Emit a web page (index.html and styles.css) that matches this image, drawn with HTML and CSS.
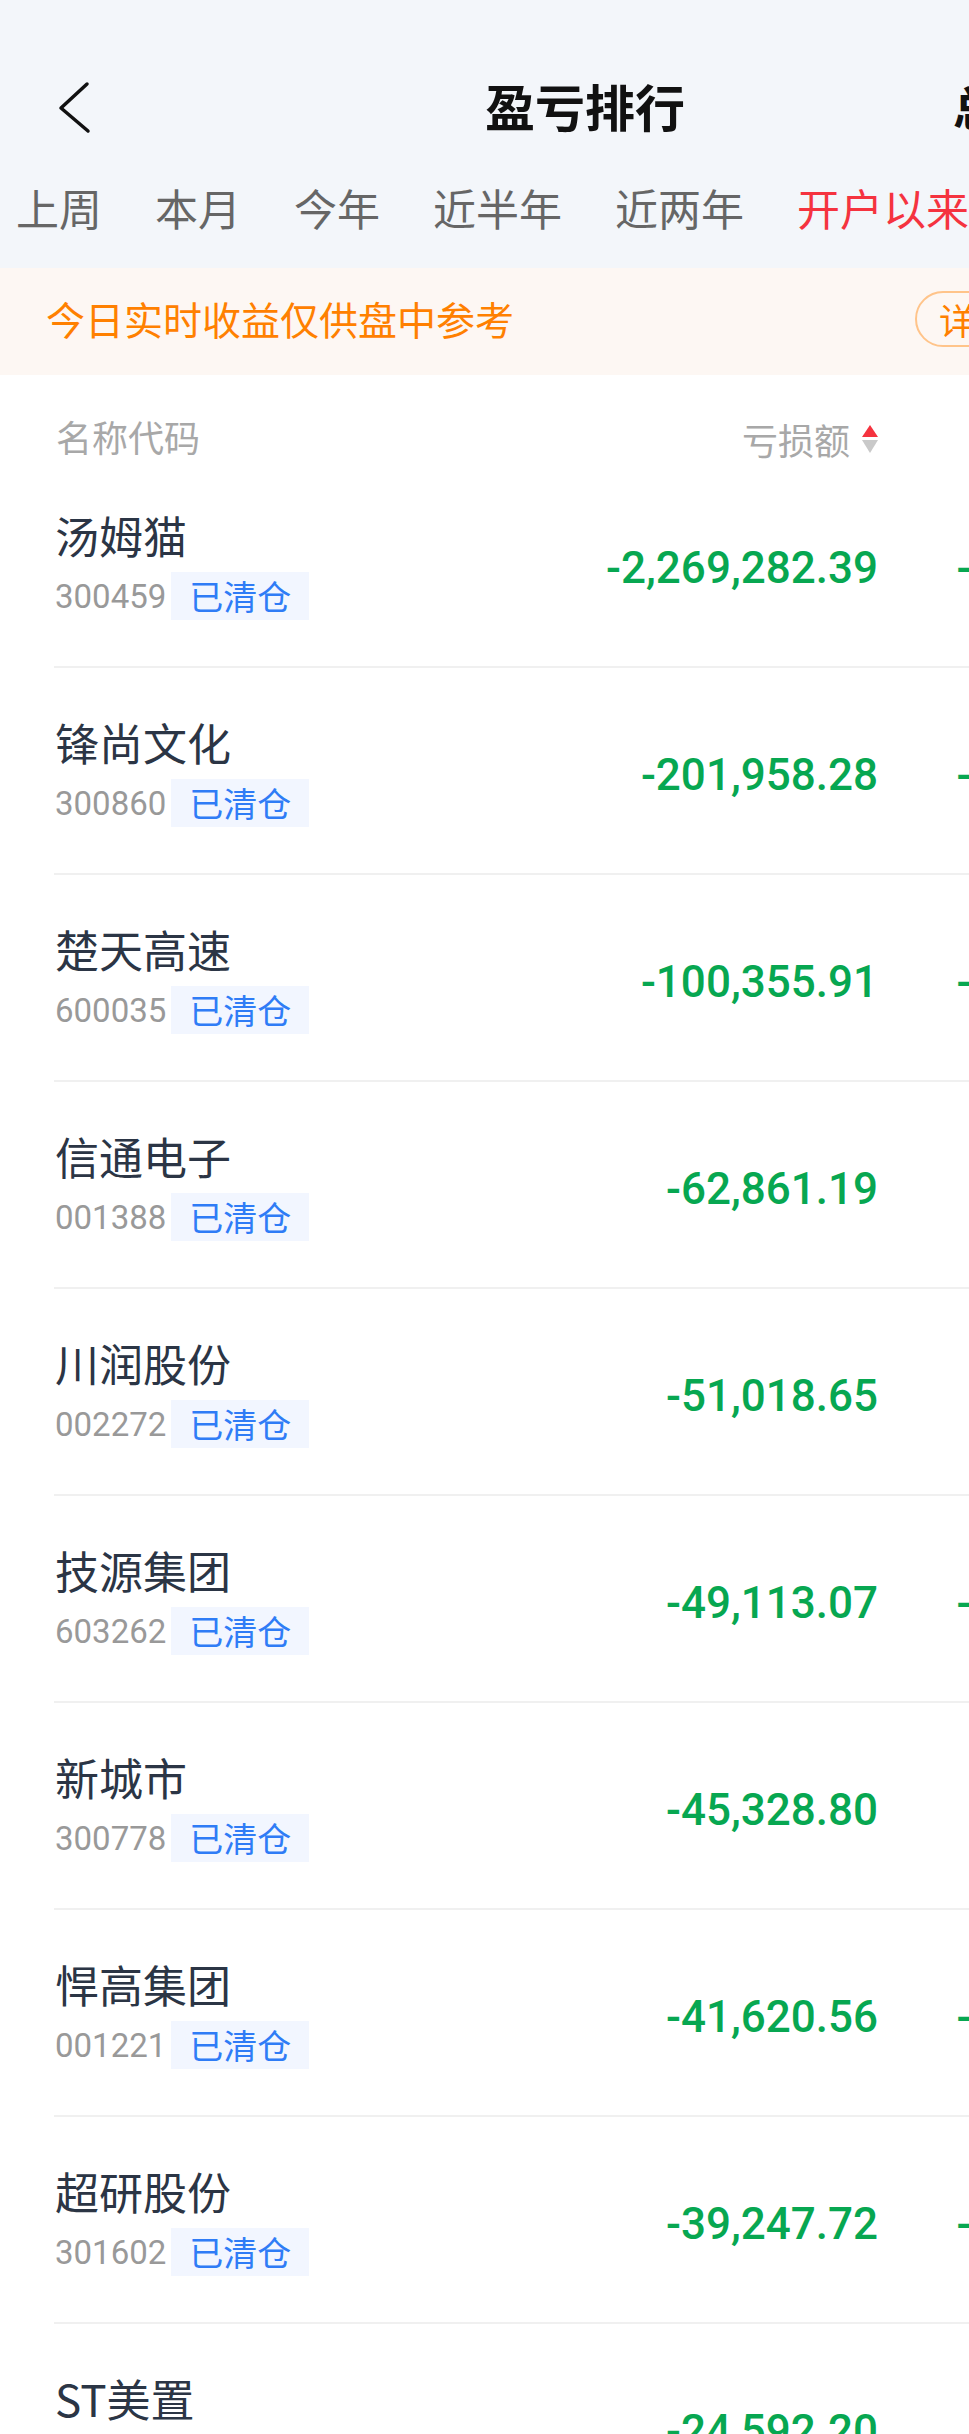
FILE: index.html
```html
<!DOCTYPE html>
<html>
<head>
  <meta charset="utf-8">
  <title>盈亏排行</title>
  <link rel="stylesheet" href="styles.css">
</head>
<body>
  <div class="viewport">
    <div class="page">
      <div class="top">
        <header class="nav">
          <a class="back" href="#">
            <svg width="34" height="54" viewBox="0 0 34 54"><path d="M29 3 L3 27 L30 50" fill="none" stroke="#111" stroke-width="3.5" stroke-linecap="round" stroke-linejoin="round"/></svg>
          </a>
          <h1 class="title">盈亏排行</h1>
          <span class="nav-right">总览</span>
        </header>
        <nav class="tabs">
          <span class="tab">上周</span>
          <span class="tab">本月</span>
          <span class="tab">今年</span>
          <span class="tab">近半年</span>
          <span class="tab">近两年</span>
          <span class="tab active">开户以来</span>
        </nav>
      </div>

      <div class="notice">
        <span class="notice-text">今日实时收益仅供盘中参考</span>
        <span class="detail-btn">详情</span>
      </div>

      <div class="list">
        <div class="list-head">
          <span class="col-name">名称代码</span>
          <span class="col-val">亏损额
            <svg class="sort" width="16" height="28" viewBox="0 0 16 28"><path d="M8 0 L16 12 L0 12 Z" fill="#f5333f"/><path d="M0 15 L16 15 L8 28 Z" fill="#c9c9c9"/></svg>
          </span>
          <span class="col-val2">收益率</span>
        </div>

        <div class="row">
          <div class="col-name"><div class="name">汤姆猫</div><div class="meta"><span class="code">300459</span><span class="tag">已清仓</span></div></div>
          <div class="col-val num">-2,269,282.39</div>
          <div class="col-val2 num">-38.72%</div>
        </div>
        <div class="row">
          <div class="col-name"><div class="name">锋尚文化</div><div class="meta"><span class="code">300860</span><span class="tag">已清仓</span></div></div>
          <div class="col-val num">-201,958.28</div>
          <div class="col-val2 num">-21.56%</div>
        </div>
        <div class="row">
          <div class="col-name"><div class="name">楚天高速</div><div class="meta"><span class="code">600035</span><span class="tag">已清仓</span></div></div>
          <div class="col-val num">-100,355.91</div>
          <div class="col-val2 num">-14.03%</div>
        </div>
        <div class="row">
          <div class="col-name"><div class="name">信通电子</div><div class="meta"><span class="code">001388</span><span class="tag">已清仓</span></div></div>
          <div class="col-val num">-62,861.19</div>
          <div class="col-val2 num">-8.47%</div>
        </div>
        <div class="row">
          <div class="col-name"><div class="name">川润股份</div><div class="meta"><span class="code">002272</span><span class="tag">已清仓</span></div></div>
          <div class="col-val num">-51,018.65</div>
          <div class="col-val2 num">-6.92%</div>
        </div>
        <div class="row">
          <div class="col-name"><div class="name">技源集团</div><div class="meta"><span class="code">603262</span><span class="tag">已清仓</span></div></div>
          <div class="col-val num">-49,113.07</div>
          <div class="col-val2 num">-12.38%</div>
        </div>
        <div class="row">
          <div class="col-name"><div class="name">新城市</div><div class="meta"><span class="code">300778</span><span class="tag">已清仓</span></div></div>
          <div class="col-val num">-45,328.80</div>
          <div class="col-val2 num">-5.14%</div>
        </div>
        <div class="row">
          <div class="col-name"><div class="name">悍高集团</div><div class="meta"><span class="code">001221</span><span class="tag">已清仓</span></div></div>
          <div class="col-val num">-41,620.56</div>
          <div class="col-val2 num">-17.65%</div>
        </div>
        <div class="row">
          <div class="col-name"><div class="name">超研股份</div><div class="meta"><span class="code">301602</span><span class="tag">已清仓</span></div></div>
          <div class="col-val num">-39,247.72</div>
          <div class="col-val2 num">-10.29%</div>
        </div>
        <div class="row">
          <div class="col-name"><div class="name">ST美置</div><div class="meta"><span class="code">000667</span><span class="tag">已清仓</span></div></div>
          <div class="col-val num">-24,592.20</div>
          <div class="col-val2 num">-3.81%</div>
        </div>
      </div>
    </div>
  </div>
</body>
</html>
```

FILE: styles.css
```css
html, body { margin: 0; padding: 0; background: #fff; }
body { font-family: "Noto Sans CJK SC", "Noto Sans", sans-serif; }

.viewport { width: 969px; overflow: hidden; }
.page { width: 1170px; }

/* top bar + period tabs */
.top { background: #f3f6fa; padding-top: 47px; padding-bottom: 17px; }
.nav { height: 116px; display: grid; grid-template-columns: 1fr auto 1fr; align-items: center; }
.back { display: flex; padding-left: 58px; margin-top: 6px; }
.title { margin: 0; font-size: 50px; font-weight: 700; color: #111; line-height: 60px; }
.nav-right { justify-self: end; padding-right: 125px; font-size: 46px; font-weight: 700; color: #111; line-height: 60px; }

.tabs { height: 88px; display: flex; align-items: center; gap: 53px; padding-left: 16px; white-space: nowrap; }
.tab { font-size: 43px; line-height: 1; color: #666; }
.tab.active { color: #f5333f; }

/* notice banner */
.notice { height: 107px; box-sizing: border-box; background: #fdf7f3; display: flex; align-items: center; justify-content: space-between; padding: 0 135px 6px 46px; }
.notice-text { font-size: 39px; color: #ff8000; line-height: 1; }
.detail-btn { height: 56px; box-sizing: border-box; border: 2px solid #ffc48a; border-radius: 28px; padding: 0 22px; font-size: 36px; line-height: 52px; color: #ff8000; }

/* list */
.list { margin-left: 54px; }
.list-head, .row { display: grid; grid-template-columns: 1fr 300px 238px; padding-right: 54px; }
.list-head { height: 86px; box-sizing: border-box; padding-top: 41px; font-size: 36px; line-height: 40px; color: #a8a8a8; }
.list-head .col-name { padding-left: 2px; }
.list-head .col-val { display: flex; align-items: center; justify-content: flex-end; gap: 12px; }
.list-head .col-val2 { text-align: right; }

.row { height: 207px; box-sizing: border-box; border-bottom: 2px solid #f0f0f0; align-items: center; }
.col-name { padding-left: 1px; }
.name { font-size: 44px; line-height: 56px; color: #2b3545; }
.meta { display: flex; align-items: center; height: 48px; margin-top: 9px; }
.code { font-family: Roboto, "Noto Sans", sans-serif; font-size: 33px; color: #999; }
.tag { margin-left: 5px; height: 48px; padding: 0 18px; background: #f2f6ff; color: #2f7cf6; font-size: 34px; line-height: 48px; }

.num { font-family: Roboto, "Noto Sans", sans-serif; font-size: 44px; font-weight: 500; color: #07a751; text-align: right; white-space: nowrap; padding-top: 9px; }
```
